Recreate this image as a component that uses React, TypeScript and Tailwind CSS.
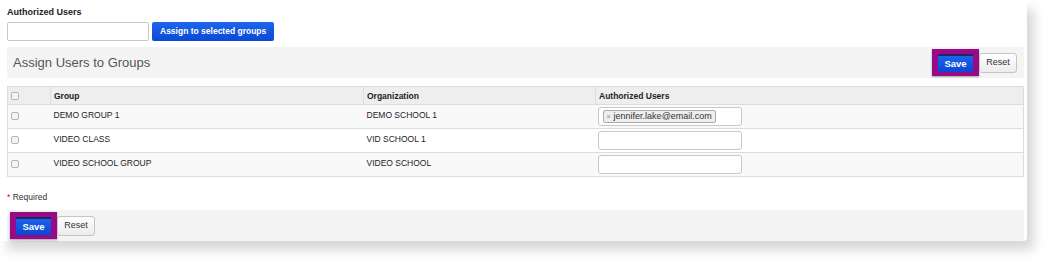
const font = { fontFamily: '"Liberation Sans", Arial, sans-serif' };

const rows = [
  { group: 'DEMO GROUP 1', org: 'DEMO SCHOOL 1', users: ['jennifer.lake@email.com'] },
  { group: 'VIDEO CLASS', org: 'VID SCHOOL 1', users: [] as string[] },
  { group: 'VIDEO SCHOOL GROUP', org: 'VIDEO SCHOOL', users: [] as string[] },
];

function Checkbox() {
  return <span className="block h-[8px] w-[8px] rounded-[2px] border border-[#b5b5b5] bg-[#f4f4f4]" />;
}

function SaveReset() {
  return (
    <div className="flex items-center">
      <div className="flex h-[27px] items-center bg-[#990a87] px-[6px] shadow-[0_1px_2px_rgba(0,0,0,0.35)]">
        <button className="h-[18px] w-[35px] border-t-2 border-[#1b2a66] bg-gradient-to-b from-[#1c63ea] to-[#0a46d4] text-[9.5px] font-bold leading-none text-white">
          Save
        </button>
      </div>
      <button className="h-[20px] w-[38px] rounded-[3px] border border-[#c4c4c4] bg-gradient-to-b from-white to-[#ececec] text-[9px] leading-none text-[#333]">
        Reset
      </button>
    </div>
  );
}

export default function App() {
  return (
    <div className="h-[264px] w-[1050px] bg-white" style={font}>
      <div className="flex h-[241px] w-[1027px] flex-col rounded-br-[4px] bg-white pl-[7px] pr-[3px] shadow-[7px_9px_12px_rgba(0,0,0,0.16)]">
        <div className="pt-[6px] text-[9px] font-bold leading-[12px] text-[#222]">Authorized Users</div>
        <div className="mt-[4px] flex items-center gap-[3px]">
          <input className="h-[19px] w-[142px] rounded-[2px] border border-[#c8c8c8] bg-white" />
          <button className="h-[19px] rounded-[2px] bg-gradient-to-b from-[#1e66ec] to-[#0b48d6] px-[8px] text-[8.5px] font-bold leading-none text-white">
            Assign to selected groups
          </button>
        </div>

        <div className="mt-[6px] flex h-[32px] items-center justify-between bg-[#f4f4f4] pl-[6px] pr-[7px]">
          <span className="text-[13px] leading-none text-[#555]">Assign Users to Groups</span>
          <SaveReset />
        </div>

        <table className="mt-[8px] w-full border-collapse border border-[#dddddd] text-[8.5px] text-[#222]">
          <thead>
            <tr className="h-[18px] bg-[#eeeeee] text-left font-bold">
              <th className="w-[43px] border border-[#dddddd] pl-[3px]">
                <Checkbox />
              </th>
              <th className="w-[313px] border border-[#dddddd] pl-[3px]">Group</th>
              <th className="w-[232px] border border-[#dddddd] pl-[3px]">Organization</th>
              <th className="border border-[#dddddd] pl-[3px]">Authorized Users</th>
            </tr>
          </thead>
          <tbody>
            {rows.map((r, i) => (
              <tr key={r.group} className={`h-[23px] ${i % 2 === 0 ? 'bg-[#f9f9f9]' : 'bg-white'}`}>
                <td className="border-y border-[#dddddd] pl-[3px] align-top pt-[7px]">
                  <Checkbox />
                </td>
                <td className="border-y border-[#dddddd] pl-[3px] align-top pt-[4px]">{r.group}</td>
                <td className="border-y border-[#dddddd] pl-[3px] align-top pt-[4px]">{r.org}</td>
                <td className="border-y border-[#dddddd] pl-[2px] py-[2px] align-top">
                  <div className="flex h-[19px] w-[144px] items-center rounded-[3px] border border-[#c8c8c8] bg-white px-[4px]">
                    {r.users.map(u => (
                      <span
                        key={u}
                        className="flex h-[13px] items-center gap-[3px] rounded-[2px] border border-[#aaaaaa] bg-[#eeeeee] px-[3px] text-[9px] leading-none text-[#333]"
                      >
                        <span className="text-[7px] text-[#888]">×</span>
                        {u}
                      </span>
                    ))}
                  </div>
                </td>
              </tr>
            ))}
          </tbody>
        </table>

        <div className="mt-[14px] text-[8.5px] leading-[12px] text-[#333]">
          <span className="text-[#d0021b]">*</span> Required
        </div>

        <div className="mt-[7px] flex h-[31px] items-center bg-[#f4f4f4] pl-[3px]">
          <SaveReset />
        </div>
      </div>
    </div>
  );
}
